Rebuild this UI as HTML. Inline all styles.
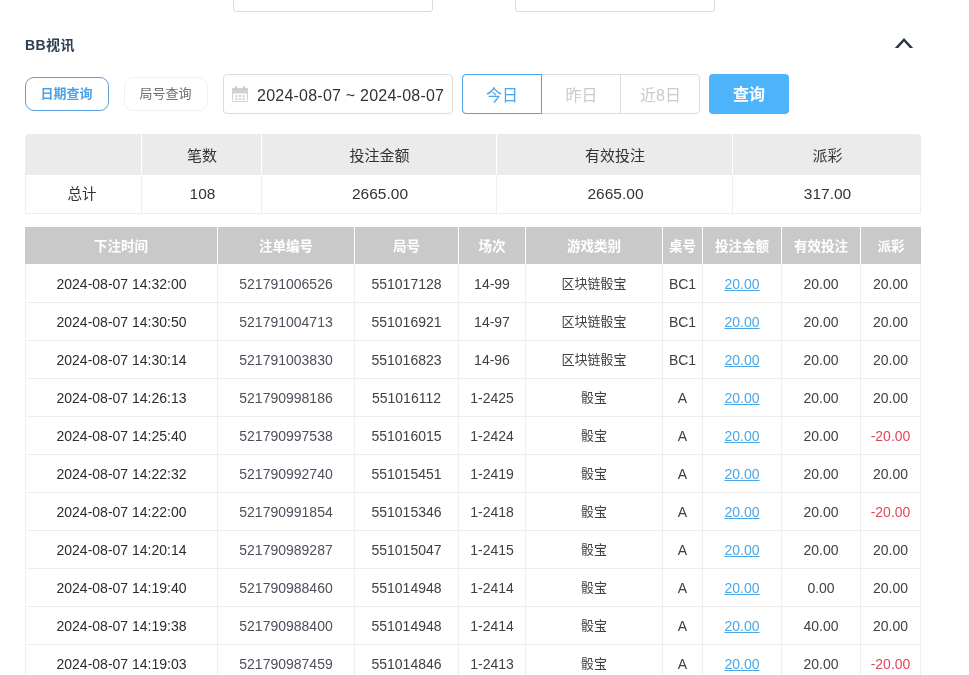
<!DOCTYPE html>
<html lang="zh-CN">
<head>
<meta charset="utf-8">
<title>BB视讯</title>
<style>
*{box-sizing:border-box;margin:0;padding:0}
html,body{width:969px;height:675px;overflow:hidden;background:#fff}
body{position:relative;font-family:"Liberation Sans","Noto Sans CJK SC",sans-serif;color:#333;font-size:14px;will-change:transform}
.abs{position:absolute}
.topbox{position:absolute;top:-30px;height:42px;width:200px;border:1px solid #dcdcdc;border-radius:3px;background:#fff}
.title{position:absolute;left:25px;top:34px;height:22px;line-height:22px;font-size:14px;font-weight:bold;color:#2c3e50;letter-spacing:0.4px}
.pill{position:absolute;top:77px;height:34px;width:84px;border:1px solid #f0f0f0;border-radius:9px;background:#fff;text-align:center;line-height:32px;font-size:13px;color:#6e6e6e;padding-right:1px}
.pill.on{border-color:#5c9fdc;color:#4aa2e8;font-weight:bold}
.date{position:absolute;left:223px;top:74px;width:230px;height:40px;border:1px solid #dcdcdc;border-radius:4px;background:#fff}
.date span{position:absolute;left:33px;top:2px;line-height:38px;font-size:16px;letter-spacing:0.23px;color:#333;white-space:nowrap}
.grp{position:absolute;left:462px;top:74px;width:238px;height:40px;border:1px solid #dcdcdc;border-radius:4px;background:#fff}
.grp div{position:absolute;top:-1px;height:40px;line-height:41px;text-align:center;font-size:16px;color:#cbcbcb;border:1px solid transparent}
.grp .g1{left:-1px;width:80px;border:1px solid #4aa5ec;border-radius:4px 0 0 4px;color:#4aa5ec}
.grp .g2{left:79px;width:79px;border-right:1px solid #dcdcdc}
.grp .g3{left:158px;width:79px}
.qbtn{position:absolute;left:709px;top:74px;width:80px;height:40px;border-radius:4px;background:#4db4fb;color:#fff;font-size:16px;font-weight:bold;text-align:center;line-height:42px}
table{border-collapse:separate;border-spacing:0;table-layout:fixed;position:absolute;left:25px}
.sum{top:134px;width:896px}
.sum th{height:41px;padding-left:1px;background:#ebebeb;font-weight:normal;font-size:15px;color:#333;border-right:1px solid #fff;text-align:center}
.sum th:first-child{border-top-left-radius:4px}
.sum th:last-child{border-top-right-radius:4px;border-right:none}
.sum td{height:39px;font-size:15.5px;text-align:center;padding-left:2px;border-right:1px solid #eee;border-bottom:1px solid #eee}
.sum td:first-child{border-left:1px solid #eee;font-size:14.5px;padding-left:0;padding-right:3px;padding-bottom:3px}
.main{top:227px;width:896px}
.main th{height:37px;padding-bottom:1px;background:#c9c9c9;color:#fff;font-weight:bold;font-size:13.5px;border-right:1px solid #fff;text-align:center}
.main th:last-child{border-right:none}
.main td{height:38px;font-size:14px;text-align:center;border-right:1px solid #eee;border-bottom:1px solid #eee;color:#404040;white-space:nowrap;padding-top:1px}
.main tr:nth-child(2) td{height:39px}
.main td:first-child{color:#2b2b2b}
.main td:nth-child(2){color:#4b505a}
.main td.c{font-size:13px;padding-top:0;padding-bottom:2px}
.main td:first-child{border-left:1px solid #eee}
.main a{color:#4aa8e8;text-decoration:underline}
.neg{color:#e0475a !important}
</style>
</head>
<body>
<div class="topbox" style="left:233px"></div>
<div class="topbox" style="left:515px"></div>
<div class="title">BB视讯</div>
<svg class="abs" style="left:893px;top:36px" width="22" height="14" viewBox="0 0 22 14"><polygon points="1.8,12 11,2 20.2,12 16.8,12 11,5.5 5.2,12" fill="#2c3348"/></svg>
<div class="pill on" style="left:25px">日期查询</div>
<div class="pill" style="left:124px">局号查询</div>
<div class="date">
<svg class="abs" style="left:8px;top:11px" width="16" height="16" viewBox="0 0 16 16"><rect x="0.5" y="2.5" width="15" height="13" rx="1" fill="#fff" stroke="#d2d2d2" stroke-width="1"/><rect x="0" y="2" width="16" height="5.5" fill="#d2d2d2"/><rect x="3" y="0" width="2" height="4" rx="1" fill="#c8c8c8"/><rect x="11" y="0" width="2" height="4" rx="1" fill="#c8c8c8"/><g fill="#d2d2d2"><rect x="3.5" y="9" width="2" height="2"/><rect x="7" y="9" width="2" height="2"/><rect x="10.5" y="9" width="2" height="2"/><rect x="3.5" y="12" width="2" height="2"/><rect x="7" y="12" width="2" height="2"/><rect x="10.5" y="12" width="2" height="2"/></g></svg>
<span>2024-08-07 ~ 2024-08-07</span></div>
<div class="grp"><div class="g1">今日</div><div class="g2">昨日</div><div class="g3">近8日</div></div>
<div class="qbtn">查询</div>

<table class="sum">
<colgroup><col style="width:117px"><col style="width:120px"><col style="width:235px"><col style="width:236px"><col style="width:188px"></colgroup>
<tr><th></th><th>笔数</th><th>投注金额</th><th>有效投注</th><th>派彩</th></tr>
<tr><td>总计</td><td>108</td><td>2665.00</td><td>2665.00</td><td>317.00</td></tr>
</table>

<table class="main">
<colgroup><col style="width:193px"><col style="width:137px"><col style="width:104px"><col style="width:67px"><col style="width:137px"><col style="width:40px"><col style="width:79px"><col style="width:79px"><col style="width:60px"></colgroup>
<tr><th>下注时间</th><th>注单编号</th><th>局号</th><th>场次</th><th>游戏类别</th><th>桌号</th><th>投注金额</th><th>有效投注</th><th>派彩</th></tr>
<tr><td>2024-08-07 14:32:00</td><td>521791006526</td><td>551017128</td><td>14-99</td><td class="c">区块链骰宝</td><td>BC1</td><td><a>20.00</a></td><td>20.00</td><td>20.00</td></tr>
<tr><td>2024-08-07 14:30:50</td><td>521791004713</td><td>551016921</td><td>14-97</td><td class="c">区块链骰宝</td><td>BC1</td><td><a>20.00</a></td><td>20.00</td><td>20.00</td></tr>
<tr><td>2024-08-07 14:30:14</td><td>521791003830</td><td>551016823</td><td>14-96</td><td class="c">区块链骰宝</td><td>BC1</td><td><a>20.00</a></td><td>20.00</td><td>20.00</td></tr>
<tr><td>2024-08-07 14:26:13</td><td>521790998186</td><td>551016112</td><td>1-2425</td><td class="c">骰宝</td><td>A</td><td><a>20.00</a></td><td>20.00</td><td>20.00</td></tr>
<tr><td>2024-08-07 14:25:40</td><td>521790997538</td><td>551016015</td><td>1-2424</td><td class="c">骰宝</td><td>A</td><td><a>20.00</a></td><td>20.00</td><td class="neg">-20.00</td></tr>
<tr><td>2024-08-07 14:22:32</td><td>521790992740</td><td>551015451</td><td>1-2419</td><td class="c">骰宝</td><td>A</td><td><a>20.00</a></td><td>20.00</td><td>20.00</td></tr>
<tr><td>2024-08-07 14:22:00</td><td>521790991854</td><td>551015346</td><td>1-2418</td><td class="c">骰宝</td><td>A</td><td><a>20.00</a></td><td>20.00</td><td class="neg">-20.00</td></tr>
<tr><td>2024-08-07 14:20:14</td><td>521790989287</td><td>551015047</td><td>1-2415</td><td class="c">骰宝</td><td>A</td><td><a>20.00</a></td><td>20.00</td><td>20.00</td></tr>
<tr><td>2024-08-07 14:19:40</td><td>521790988460</td><td>551014948</td><td>1-2414</td><td class="c">骰宝</td><td>A</td><td><a>20.00</a></td><td>0.00</td><td>20.00</td></tr>
<tr><td>2024-08-07 14:19:38</td><td>521790988400</td><td>551014948</td><td>1-2414</td><td class="c">骰宝</td><td>A</td><td><a>20.00</a></td><td>40.00</td><td>20.00</td></tr>
<tr><td>2024-08-07 14:19:03</td><td>521790987459</td><td>551014846</td><td>1-2413</td><td class="c">骰宝</td><td>A</td><td><a>20.00</a></td><td>20.00</td><td class="neg">-20.00</td></tr>
</table>
</body>
</html>
